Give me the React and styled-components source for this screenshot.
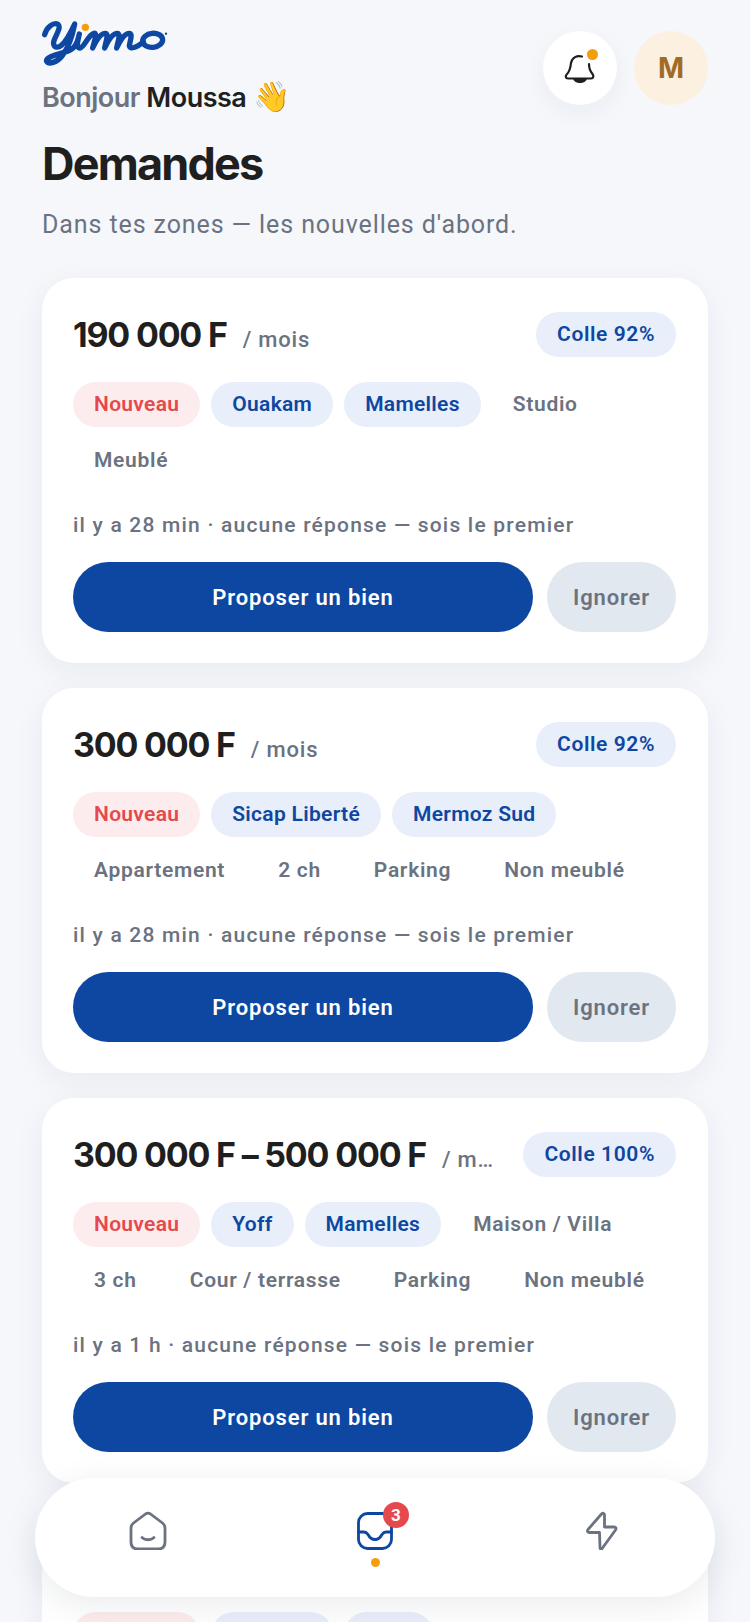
import React from "react";
import styled, { createGlobalStyle } from "styled-components";

const GlobalStyle = createGlobalStyle`
  html, body {
    margin: 0;
    padding: 0;
    background: #f5f7fb;
  }
  * {
    box-sizing: border-box;
  }
`;

const requests = [
  {
    price: "190 000 F",
    match: "Colle 92%",
    zones: ["Ouakam", "Mamelles"],
    details: ["Studio", "Meublé"],
    age: "il y a 28 min",
  },
  {
    price: "300 000 F",
    match: "Colle 92%",
    zones: ["Sicap Liberté", "Mermoz Sud"],
    details: ["Appartement", "2 ch", "Parking", "Non meublé"],
    age: "il y a 28 min",
  },
  {
    price: "300 000 F – 500 000 F",
    match: "Colle 100%",
    zones: ["Yoff", "Mamelles"],
    details: ["Maison / Villa", "3 ch", "Cour / terrasse", "Parking", "Non meublé"],
    age: "il y a 1 h",
  },
  {
    price: "250 000 F",
    match: "Colle 92%",
    zones: ["Ouakam", "Fann"],
    details: ["Studio"],
    age: "il y a 2 h",
  },
];

const App = () => {
  return (
    <Page>
      <GlobalStyle />
      <Header>
        <div>
          <Logo viewBox="18 18 378 138">
            <g fill="none" stroke="#0d47a1" strokeWidth="16" strokeLinecap="round" strokeLinejoin="round">
              <path d="M26 62C32 38 54 24 66 31C78 40 56 68 53 84C51 100 64 104 76 94C92 81 104 56 116 30C110 62 98 100 78 126C62 146 38 152 32 142C28 130 60 122 88 114C108 108 122 100 130 60C124 84 120 104 132 102C146 100 156 62 174 58C186 56 172 90 170 102C180 80 194 58 208 58C220 58 208 88 206 102C216 80 230 58 244 58C256 58 244 88 242 102C252 80 266 58 280 58C292 58 280 88 280 96C282 106 300 102 322 84" />
              <ellipse cx="350" cy="79" rx="30" ry="21" transform="rotate(-6 350 79)" />
            </g>
            <circle cx="148" cy="40" r="11" fill="#f59e0b" />
            <circle cx="390" cy="59" r="3.500" fill="#0d47a1" />
          </Logo>
          <Greeting>
            Bonjour <strong>Moussa</strong> <Wave>👋</Wave>
          </Greeting>
        </div>
        <HeaderActions>
          <RoundButton>
            <svg width="60" height="60" viewBox="0 3 60 60" fill="none">
              <path
                d="M32 21.500C27 20 22 22.500 21 28C20.500 33 20 36 17 39C15 41 15.500 43.500 18 43.500H41C43.500 43.500 44 41 42.500 39C40 36 39 33 39 29"
                stroke="#1f1f1f"
                strokeWidth="2.2"
                strokeLinecap="round"
              />
              <path d="M23 43.500H37C36 47 33 48 30 48C27 48 24 47 23 43.500Z" fill="#1f1f1f" />
            </svg>
            <BellDot />
          </RoundButton>
          <Avatar>M</Avatar>
        </HeaderActions>
      </Header>

      <Title>Demandes</Title>
      <Subtitle>Dans tes zones — les nouvelles d'abord.</Subtitle>

      <CardList>
        {requests.map((request, index) => (
          <Card key={index}>
            <CardTop>
              <PriceLine>
                <Price>{request.price}</Price>
                <Period>/ mois</Period>
              </PriceLine>
              <MatchBadge>{request.match}</MatchBadge>
            </CardTop>
            <Chips>
              <Chip $kind="new">Nouveau</Chip>
              {request.zones.map((zone) => (
                <Chip key={zone} $kind="zone">
                  {zone}
                </Chip>
              ))}
              {request.details.map((detail) => (
                <Chip key={detail}>{detail}</Chip>
              ))}
            </Chips>
            <Meta>{request.age} · aucune réponse — sois le premier</Meta>
            <Actions>
              <PrimaryButton>Proposer un bien</PrimaryButton>
              <GhostButton>Ignorer</GhostButton>
            </Actions>
          </Card>
        ))}
      </CardList>

      <BottomNav>
        <NavItem>
          <svg width="40" height="40" viewBox="0 0 40 40" fill="none" stroke="#6b7280" strokeWidth="2.8" strokeLinecap="round" strokeLinejoin="round">
            <path d="M17.500 4L5.500 13C4 14.300 3 16 3 18V32C3 36.500 5.500 39 10 39H30C34.500 39 37 36.500 37 32V18C37 16 36 14.300 34.500 13L22.500 4C21 3 19 3 17.500 4Z" />
            <path d="M14 27.500C17 30.500 23 30.500 26 27.500" />
          </svg>
        </NavItem>
        <NavItem>
          <svg width="40" height="40" viewBox="0 0 40 40" fill="none" stroke="#0d47a1" strokeWidth="2.8" strokeLinecap="round" strokeLinejoin="round">
            <rect x="3.500" y="3.500" width="33" height="35" rx="9" />
            <path d="M3.500 22H9C11 22 12 23 13 24.500C14.500 27.500 17 29.500 20 29.500C23 29.500 25.500 27.500 27 24.500C28 23 29 22 31 22H36.500" />
          </svg>
          <CountBadge>3</CountBadge>
          <ActiveDot />
        </NavItem>
        <NavItem>
          <svg width="40" height="40" viewBox="0 0 40 40" fill="none" stroke="#6b7280" strokeWidth="2.8" strokeLinecap="round" strokeLinejoin="round">
            <path d="M19.500 4L6 19.500C5 21 5.500 22.500 7.500 22.500H17.500L18 37.500C18 39.500 19.500 39.500 20.500 38L33.500 20C34.500 18.500 34 17 32 17H22.500L22.500 5C22.500 3 20.800 2.800 19.500 4Z" />
          </svg>
        </NavItem>
      </BottomNav>
    </Page>
  );
};

const Page = styled.div`
  position: relative;
  width: 750px;
  height: 1622px;
  overflow: hidden;
  padding: 20px 42px 0;
  background: #f5f7fb;
  font-family: Roboto, sans-serif;
`;

const Header = styled.header`
  display: flex;
  justify-content: space-between;
  align-items: flex-start;
`;

const Logo = styled.svg`
  display: block;
  width: 126px;
  height: 46px;
`;

const Greeting = styled.div`
  margin-top: 13px;
  font-family: Inter, sans-serif;
  font-size: 27px;
  line-height: 34px;
  font-weight: 600;
  letter-spacing: -0.5px;
  color: #6b7280;

  strong {
    font-weight: 600;
    color: #1f1f1f;
  }
`;

const Wave = styled.span`
  font-size: 30px;
  letter-spacing: 0;
`;

const HeaderActions = styled.div`
  display: flex;
  gap: 17px;
  margin-top: 11px;
`;

const RoundButton = styled.div`
  position: relative;
  display: flex;
  align-items: center;
  justify-content: center;
  width: 74px;
  height: 74px;
  border-radius: 50%;
  background: #fff;
  box-shadow: 0 8px 24px rgba(20, 30, 60, 0.05);
`;

const BellDot = styled.span`
  position: absolute;
  top: 18px;
  right: 19px;
  width: 11px;
  height: 11px;
  border-radius: 50%;
  background: #f59e0b;
`;

const Avatar = styled.div`
  display: flex;
  align-items: center;
  justify-content: center;
  width: 74px;
  height: 74px;
  border-radius: 50%;
  background: #fcf0e0;
  color: #a16a26;
  font-family: Inter, sans-serif;
  font-size: 28px;
  font-weight: 700;
`;

const Title = styled.h1`
  margin: 21px 0 0;
  font-family: Inter, sans-serif;
  font-size: 45px;
  line-height: 56px;
  font-weight: 700;
  letter-spacing: -1.8px;
  color: #1f1f1f;
`;

const Subtitle = styled.p`
  margin: 16px 0 0;
  font-size: 25px;
  line-height: 34px;
  letter-spacing: 0.9px;
  color: #6b7280;
`;

const CardList = styled.div`
  display: flex;
  flex-direction: column;
  gap: 25px;
  margin-top: 36px;
`;

const Card = styled.article`
  padding: 31px 32px 31px 31px;
  border-radius: 32px;
  background: #fff;
  box-shadow: 0 8px 32px rgba(20, 30, 60, 0.06);
`;

const CardTop = styled.div`
  display: flex;
  justify-content: space-between;
  align-items: center;
  gap: 22px;
  height: 50px;
`;

const PriceLine = styled.div`
  flex: 1;
  display: flex;
  align-items: baseline;
  gap: 16px;
  min-width: 0;
  white-space: nowrap;
`;

const Price = styled.span`
  flex-shrink: 0;
  font-family: Inter, sans-serif;
  font-size: 34px;
  font-weight: 700;
  letter-spacing: -1.2px;
  color: #1f1f1f;
`;

const Period = styled.span`
  min-width: 0;
  overflow: hidden;
  text-overflow: ellipsis;
  font-size: 22px;
  font-weight: 500;
  letter-spacing: 0.8px;
  color: #6b7280;
`;

const MatchBadge = styled.span`
  flex-shrink: 0;
  padding: 0 21px;
  height: 45px;
  line-height: 45px;
  border-radius: 23px;
  background: #e8eefa;
  color: #0d47a1;
  font-size: 21px;
  font-weight: 600;
  letter-spacing: 0.6px;
`;

const Chips = styled.div`
  display: flex;
  flex-wrap: wrap;
  gap: 11px;
  margin-top: 23px;
`;

const chipColors = {
  new: "background: #fdeced; color: #e5484d;",
  zone: "background: #e8eefa; color: #0d47a1;",
  plain: "background: transparent; color: #6b7280; letter-spacing: 0.7px;",
};

const Chip = styled.span`
  padding: 0 21px;
  height: 45px;
  line-height: 45px;
  border-radius: 23px;
  font-size: 21px;
  font-weight: 600;
  letter-spacing: 0.3px;
  ${(props) => chipColors[props.$kind || "plain"]}
`;

const Meta = styled.p`
  margin: 25px 0 0;
  font-size: 21px;
  line-height: 34px;
  font-weight: 500;
  letter-spacing: 1.2px;
  color: #6b7280;
`;

const Actions = styled.div`
  display: flex;
  gap: 14px;
  margin-top: 20px;
`;

const PrimaryButton = styled.button`
  flex: 1;
  height: 70px;
  border: none;
  border-radius: 35px;
  background: #0d47a1;
  color: #fff;
  font-family: Roboto, sans-serif;
  font-size: 22px;
  font-weight: 600;
  letter-spacing: 0.85px;
`;

const GhostButton = styled.button`
  width: 129px;
  height: 70px;
  border: none;
  border-radius: 35px;
  background: #e2e8f0;
  color: #6b7280;
  font-family: Roboto, sans-serif;
  font-size: 22px;
  font-weight: 600;
  letter-spacing: 0.85px;
`;

const BottomNav = styled.nav`
  position: absolute;
  left: 35px;
  right: 35px;
  top: 1478px;
  display: flex;
  height: 119px;
  border-radius: 60px;
  background: #fff;
  box-shadow: 0 8px 36px rgba(20, 30, 60, 0.09);
`;

const NavItem = styled.div`
  position: relative;
  flex: 1;
  display: flex;
  justify-content: center;
  padding-top: 32px;
`;

const CountBadge = styled.span`
  position: absolute;
  top: 24px;
  left: 50%;
  margin-left: 8px;
  width: 26px;
  height: 26px;
  line-height: 26px;
  text-align: center;
  border-radius: 50%;
  background: #e5484d;
  color: #fff;
  font-size: 17px;
  font-weight: 700;
`;

const ActiveDot = styled.span`
  position: absolute;
  top: 80px;
  left: 50%;
  margin-left: -4.5px;
  width: 9px;
  height: 9px;
  border-radius: 50%;
  background: #f59e0b;
`;

export default App;
